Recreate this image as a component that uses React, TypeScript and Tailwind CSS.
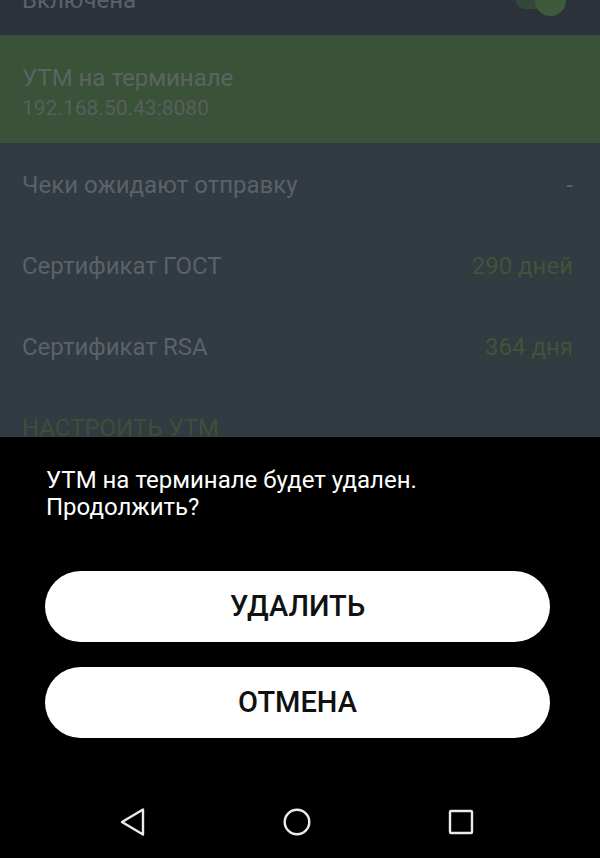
import React from "react";

type InfoRow = { label: string; value: string; accent?: boolean };

const rows: InfoRow[] = [
  { label: "Чеки ожидают отправку", value: "-" },
  { label: "Сертификат ГОСТ", value: "290 дней", accent: true },
  { label: "Сертификат RSA", value: "364 дня", accent: true },
];

function NavBar() {
  return (
    <div className="flex items-center pl-[109px] gap-[116px] h-[70px] mt-auto mb-[1px]">
      <div className="w-[48px] h-[48px] flex items-center justify-center">
        <svg width="28" height="30" viewBox="0 0 28 30" fill="none">
          <path d="M24 2.5 L24 27.5 L3 15 Z" stroke="#ececec" strokeWidth="2.4" strokeLinejoin="round" />
        </svg>
      </div>
      <div className="w-[48px] h-[48px] flex items-center justify-center">
        <svg width="30" height="30" viewBox="0 0 30 30" fill="none">
          <circle cx="15" cy="15" r="12.3" stroke="#ececec" strokeWidth="2.4" />
        </svg>
      </div>
      <div className="w-[48px] h-[48px] flex items-center justify-center">
        <svg width="28" height="28" viewBox="0 0 28 28" fill="none">
          <rect x="3" y="3" width="22" height="22" rx="1" stroke="#ececec" strokeWidth="2.4" />
        </svg>
      </div>
    </div>
  );
}

export default function App() {
  return (
    <div
      className="w-[600px] h-[858px] overflow-hidden flex flex-col bg-black"
      style={{ fontFamily: "Roboto, 'Noto Sans', sans-serif" }}
    >
      {/* settings list behind the sheet, scrolled */}
      <div className="h-[437px] shrink-0 overflow-hidden bg-[#323a42]">
        <div className="bg-[#2b323a] h-[70px] -mt-[35px] flex items-center justify-between pl-[22px] pr-[34px]">
          <span className="text-[24px] text-[#5b6268]">Включена</span>
          <div className="relative w-[50px] h-[31px] flex items-center">
            <div className="w-[46px] h-[17px] rounded-full bg-[#34483a]" />
            <div className="absolute right-0 top-0 w-[31px] h-[31px] rounded-full bg-[#3d5a3c]" />
          </div>
        </div>

        <div className="h-[108px] bg-[#3a5238] px-[22px] pt-[29px] flex flex-col">
          <span className="text-[24px] leading-[28px] text-[#5b6462]">УТМ на терминале</span>
          <span className="text-[21px] leading-[33px] text-[#56605c]">192.168.50.43:8080</span>
        </div>

        <div className="pt-[1px]">
          {rows.map((row) => (
            <div key={row.label} className="h-[81px] flex items-center justify-between pl-[22px] pr-[27px]">
              <span className="text-[24px] text-[#5b6268]">{row.label}</span>
              <span className={row.accent ? "text-[24px] text-[#3e5538]" : "text-[24px] text-[#5b6268]"}>
                {row.value}
              </span>
            </div>
          ))}
          <div className="h-[81px] flex items-center pl-[22px]">
            <span className="text-[24px] text-[#3b5038] uppercase">Настроить УТМ</span>
          </div>
        </div>
      </div>

      {/* confirmation sheet */}
      <div className="flex-1 flex flex-col bg-black">
        <p className="pt-[30px] pl-[46px] pr-[30px] text-[24px] leading-[27px] text-white">
          УТМ на терминале будет удален.
          <br />
          Продолжить?
        </p>
        <div className="flex flex-col gap-[25px] mt-[50px] ml-[45px] mr-[50px]">
          <button className="h-[71px] rounded-full bg-white text-[#111] text-[29px] font-medium">
            УДАЛИТЬ
          </button>
          <button className="h-[71px] rounded-full bg-white text-[#111] text-[29px] font-medium">
            ОТМЕНА
          </button>
        </div>
        <NavBar />
      </div>
    </div>
  );
}
